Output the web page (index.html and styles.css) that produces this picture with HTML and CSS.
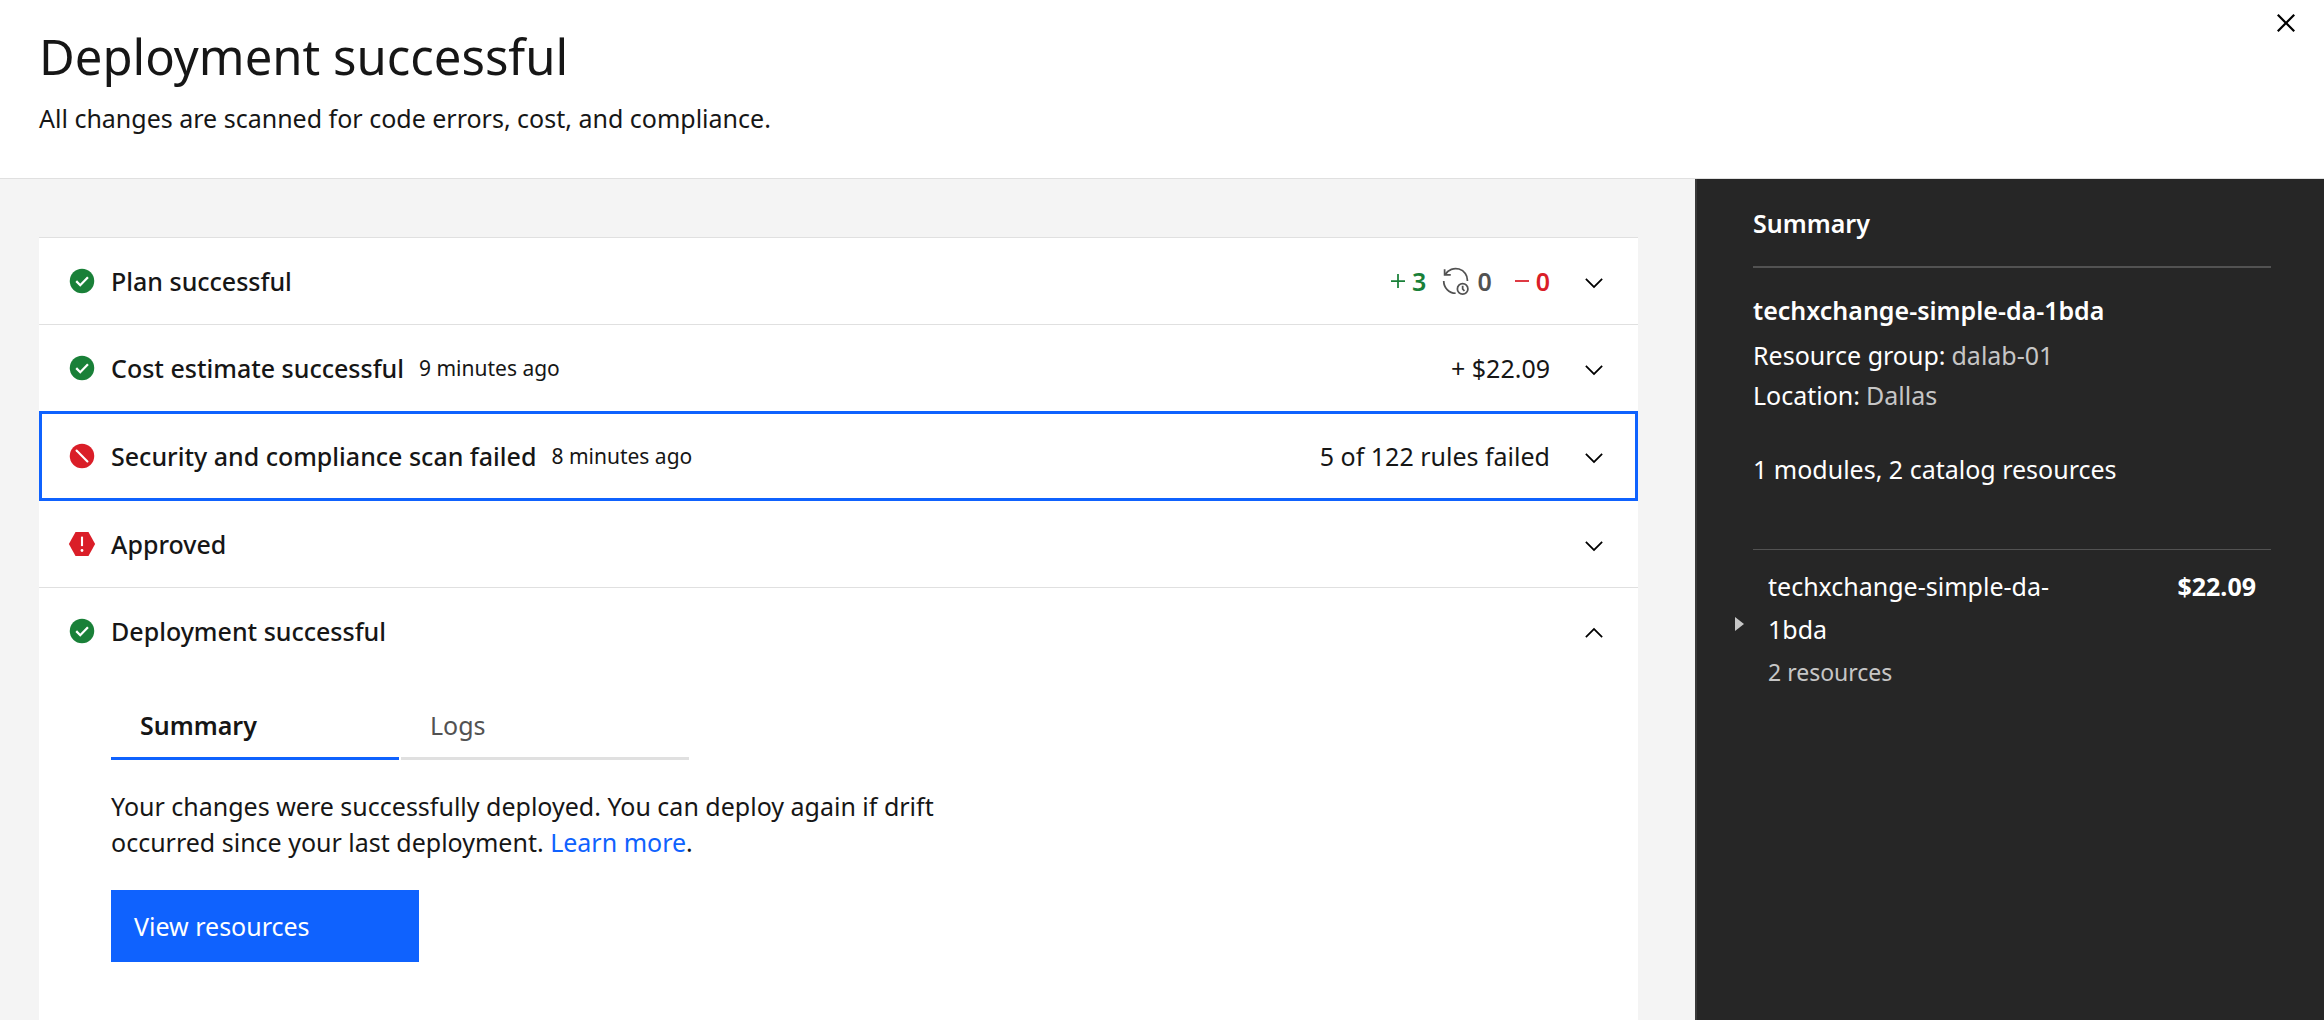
FILE: index.html
```html
<!DOCTYPE html>
<html lang="en">
<head>
<meta charset="utf-8">
<meta name="viewport" content="width=device-width, initial-scale=1">
<title>Deployment successful</title>
<link rel="stylesheet" href="styles.css">
</head>
<body>
<svg class="sprite" aria-hidden="true">
  <symbol id="success" viewBox="0 0 16 16">
    <circle cx="8" cy="8" r="7" fill="#198038"/>
    <path d="M4.700 8.100 7 10.400 11.400 5.900" fill="none" stroke="#fff" stroke-width="1.300"/>
  </symbol>
  <symbol id="failed" viewBox="0 0 16 16">
    <circle cx="8" cy="8" r="7" fill="#da1e28"/>
    <path d="M4.900 4.900 11.100 11.100" stroke="#fff" stroke-width="1.200" stroke-linecap="round"/>
  </symbol>
  <symbol id="alert" viewBox="0 0 16 16">
    <path d="M4.300 1.100h7.400L15.500 8l-3.800 6.900H4.300L.500 8z" fill="#da1e28"/>
    <path d="M8 3.800v5.400" stroke="#fff" stroke-width="1.200"/>
    <circle cx="8" cy="11.700" r=".8" fill="#fff"/>
  </symbol>
  <symbol id="chevron-down" viewBox="0 0 16 16">
    <path d="M8 11 3 6l.7-.7L8 9.6l4.3-4.3.7.7z"/>
  </symbol>
  <symbol id="chevron-up" viewBox="0 0 16 16">
    <path d="M8 5l5 5-.7.7L8 6.400l-4.300 4.300L3 10z"/>
  </symbol>
</svg>

<header class="page-header">
  <div class="page-heading">
    <h1 class="page-title">Deployment successful</h1>
    <p class="page-subtitle">All changes are scanned for code errors, cost, and compliance.</p>
  </div>
  <button class="close" type="button" aria-label="Close">
    <svg viewBox="0 0 32 32" width="36" height="36"><path d="M24 9.4 22.6 8 16 14.6 9.4 8 8 9.4l6.6 6.6L8 22.6 9.4 24l6.6-6.6 6.6 6.6 1.4-1.4-6.6-6.6z"/></svg>
  </button>
</header>

<div class="layout">
  <main class="content">
    <div class="card">
      <button class="row" type="button" aria-expanded="false">
        <svg class="icon"><use href="#success"/></svg>
        <span class="row-title">Plan successful</span>
        <span class="row-value counts">
          <span class="count added"><svg class="icon" viewBox="0 0 32 32"><path d="M16 8v16M8 16h16"/></svg>3</span>
          <span class="count changed"><svg class="icon" viewBox="0 0 32 32"><path d="M3 2.500V9h7M4 8.500A13.400 13.400 0 0 1 29 16M2 16A13.800 13.800 0 0 0 15.600 30"/><circle cx="23.600" cy="25" r="6"/><path d="M23.600 21.500V25l2 2.400"/></svg>0</span>
          <span class="count removed"><svg class="icon" viewBox="0 0 32 32"><path d="M8 16h16"/></svg>0</span>
        </span>
        <svg class="icon chevron"><use href="#chevron-down"/></svg>
      </button>
      <button class="row" type="button" aria-expanded="false">
        <svg class="icon"><use href="#success"/></svg>
        <span class="row-title">Cost estimate successful</span>
        <span class="row-time">9 minutes ago</span>
        <span class="row-value">+ $22.09</span>
        <svg class="icon chevron"><use href="#chevron-down"/></svg>
      </button>
      <button class="row row-focused" type="button" aria-expanded="false">
        <svg class="icon"><use href="#failed"/></svg>
        <span class="row-title">Security and compliance scan failed</span>
        <span class="row-time">8 minutes ago</span>
        <span class="row-value">5 of 122 rules failed</span>
        <svg class="icon chevron"><use href="#chevron-down"/></svg>
      </button>
      <button class="row" type="button" aria-expanded="false">
        <svg class="icon"><use href="#alert"/></svg>
        <span class="row-title">Approved</span>
        <svg class="icon chevron"><use href="#chevron-down"/></svg>
      </button>
      <button class="row" type="button" aria-expanded="true" aria-controls="deployment">
        <svg class="icon"><use href="#success"/></svg>
        <span class="row-title">Deployment successful</span>
        <svg class="icon chevron"><use href="#chevron-up"/></svg>
      </button>
      <div class="panel" id="deployment">
        <div class="tabs" role="tablist">
          <button class="tab tab-selected" type="button" role="tab" aria-selected="true">Summary</button>
          <button class="tab" type="button" role="tab" aria-selected="false">Logs</button>
        </div>
        <p class="message">Your changes were successfully deployed. You can deploy again if drift occurred since your last deployment. <a class="link" href="#">Learn more</a>.</p>
        <button class="primary" type="button">View resources</button>
      </div>
    </div>
  </main>

  <aside class="summary">
    <h2 class="summary-title">Summary</h2>
    <h3 class="summary-name">techxchange-simple-da-1bda</h3>
    <dl class="details">
      <div class="detail"><dt>Resource group:</dt> <dd>dalab-01</dd></div>
      <div class="detail"><dt>Location:</dt> <dd>Dallas</dd></div>
    </dl>
    <p class="totals">1 modules, 2 catalog resources</p>
    <div class="module">
      <button class="expand" type="button" aria-label="Expand techxchange-simple-da-1bda"><svg viewBox="0 0 9 14" width="9" height="14"><path d="M0 0 9 7 0 14z"/></svg></button>
      <div class="module-text">
        <p class="module-name">techxchange-simple-da-1bda</p>
        <p class="module-count">2 resources</p>
      </div>
      <strong class="module-price">$22.09</strong>
    </div>
  </aside>
</div>
</body>
</html>
```
FILE: styles.css
```css
* {
  box-sizing: border-box;
}

body {
  display: flex;
  flex-direction: column;
  min-height: 100vh;
  margin: 0;
  background: #fff;
  color: #161616;
  font-family: "Noto Sans", sans-serif;
  font-size: 25px;
  line-height: 36px;
}

h1, h2, h3, p, dl, dd {
  margin: 0;
}

button {
  padding: 0;
  border: 0;
  background: none;
  color: inherit;
  font: inherit;
  text-align: left;
  cursor: pointer;
}

svg {
  display: block;
}

.sprite {
  position: absolute;
  width: 0;
  height: 0;
}

.icon {
  flex: none;
  width: 28px;
  height: 28px;
}

/* Page header */
.page-header {
  display: flex;
  justify-content: space-between;
  align-items: flex-start;
  padding: 5px 20px 42px 39px;
  border-bottom: 1px solid #e0e0e0;
}

.page-heading {
  padding-top: 19px;
}

.page-title {
  font-size: 49px;
  font-weight: 400;
  line-height: 64px;
}

.page-subtitle {
  margin-top: 12px;
}

/* Two columns */
.layout {
  display: grid;
  flex: 1;
  grid-template-columns: minmax(0, 1fr) 629px;
}

.content {
  display: flex;
  padding: 58px 57px 0 39px;
  background: #f4f4f4;
}

.card {
  flex: 1;
  background: #fff;
}

/* Accordion rows */
.row {
  display: flex;
  align-items: center;
  width: 100%;
  min-height: 87px;
  padding: 0 30px 0 29px;
  border-top: 1px solid #e0e0e0;
}

.row-focused {
  min-height: 90px;
  border-top: 0;
  outline: 3px solid #0f62fe;
  outline-offset: -3px;
}

.row-focused + .row {
  min-height: 86px;
  border-top: 0;
}

.row-title {
  margin-left: 15px;
  font-weight: 500;
}

.row-time {
  margin-left: 15px;
  font-size: 21px;
}

.row-value {
  margin-left: auto;
}

.chevron {
  margin-top: 4px;
  margin-left: auto;
}

.row-value + .chevron {
  margin-left: 30px;
}

.counts {
  display: flex;
  gap: 16px;
  font-weight: 600;
}

.count {
  display: flex;
  align-items: center;
}

.count .icon {
  fill: none;
  stroke: currentColor;
  stroke-width: 2;
}

.added {
  color: #198038;
}

.changed {
  gap: 7px;
  color: #525252;
}

.removed {
  color: #da1e28;
}

/* Expanded panel */
.panel {
  padding: 20px 72px 58px;
}

.tabs {
  display: flex;
  gap: 2px;
}

.tab {
  width: 288px;
  padding: 13px 29px 14px;
  border-bottom: 3px solid #e0e0e0;
  color: #525252;
}

.tab-selected {
  border-bottom-color: #0f62fe;
  color: #161616;
  font-weight: 600;
}

.message {
  max-width: 840px;
  margin-top: 28px;
}

.link {
  color: #0f62fe;
  text-decoration: none;
}

.primary {
  width: 308px;
  height: 72px;
  margin-top: 30px;
  padding: 0 23px;
  background: #0f62fe;
  color: #fff;
}

/* Summary sidebar */
.summary {
  padding: 26px 53px 26px 56px;
  border-left: 2px solid #393939;
  background: #262626;
  color: #fff;
}

.summary-title {
  padding-bottom: 25px;
  border-bottom: 2px solid #525252;
  font-size: 25px;
  font-weight: 600;
}

.summary-name {
  margin-top: 24px;
  font-size: 25px;
  font-weight: 600;
}

.details {
  margin-top: 7px;
  line-height: 40px;
}

.detail {
  display: flex;
  gap: 6px;
}

.detail dd {
  color: #c6c6c6;
}

.totals {
  margin-top: 36px;
  padding-bottom: 62px;
  border-bottom: 1px solid #525252;
}

.module {
  display: flex;
  align-items: flex-start;
  gap: 24px;
  margin-left: -18px;
  padding-right: 15px;
  line-height: 43px;
}

.expand {
  align-self: center;
  fill: #c6c6c6;
}

.module-text {
  width: 320px;
  padding: 15px 0 4px;
}

.module-count {
  color: #c6c6c6;
  font-size: 23px;
}

.module-price {
  margin-left: auto;
  padding-top: 15px;
  font-weight: 700;
}
```
